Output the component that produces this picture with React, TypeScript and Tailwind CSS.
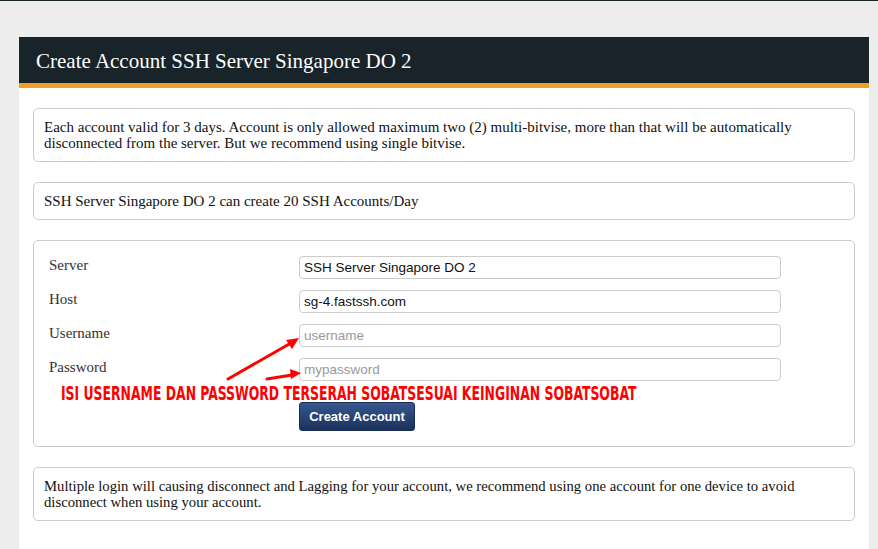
import React from "react";

const serif = { fontFamily: '"Liberation Serif", "Times New Roman", serif' };

function Box({ children, className = "" }: { children: React.ReactNode; className?: string }) {
  return (
    <div className={"rounded-[5px] border border-[#cccccc] bg-white " + className}>{children}</div>
  );
}

function Field({ label, value, placeholder }: { label: string; value?: string; placeholder?: string }) {
  return (
    <div className="flex items-start h-[23px]">
      <div className="w-[250px] text-[15px] leading-[18px] text-[#333]" style={serif}>{label}</div>
      <input
        readOnly
        defaultValue={value}
        placeholder={placeholder}
        className="w-[482px] h-[23px] rounded-[4px] border border-[#cccccc] bg-white px-[4px] text-[13.5px] text-[#111] placeholder:text-[#999] outline-none"
        style={{ fontFamily: '"Liberation Sans", Arial, sans-serif' }}
      />
    </div>
  );
}

export default function App() {
  return (
    <div className="relative w-[878px] h-[549px] overflow-hidden bg-[#ededed]">
      <div className="h-[1px] bg-[#18232a]" />
      <div className="pt-[36px] pl-[19px]">
        <div className="w-[850px] bg-white h-[520px]">
          <div className="h-[46px] bg-[#18232a] flex items-center pl-[17px]">
            <h1 className="text-white text-[21px] leading-none pt-[2px]" style={serif}>
              Create Account SSH Server Singapore DO 2
            </h1>
          </div>
          <div className="h-[5px] bg-[#ef9f24]" />
          <div className="pt-[20px] pl-[14px] w-[836px] flex flex-col gap-[20px]">
            <Box className="px-[10px] py-[10px] text-[15px] leading-[16px] text-[#111]">
              <p style={serif}>
                Each account valid for 3 days. Account is only allowed maximum two (2) multi-bitvise, more than that will be automatically disconnected from the server. But we recommend using single bitvise.
              </p>
            </Box>
            <Box className="px-[10px] py-[10px] text-[15px] leading-[16px] text-[#111]">
              <p style={serif}>SSH Server Singapore DO 2 can create 20 SSH Accounts/Day</p>
            </Box>
            <Box className="relative pl-[15px] pt-[15px] pb-[15px] h-[207px]">
              <div className="flex flex-col gap-[11px]">
                <Field label="Server" value="SSH Server Singapore DO 2" />
                <Field label="Host" value="sg-4.fastssh.com" />
                <Field label="Username" placeholder="username" />
                <Field label="Password" placeholder="mypassword" />
              </div>
              <div className="mt-[1px] ml-[12px] h-[22px] whitespace-nowrap">
                <span
                  className="inline-block origin-left scale-x-[0.69] text-[#ff0000] text-[20px] leading-[22px] font-bold"
                  style={{ fontFamily: '"DejaVu Sans Condensed", "DejaVu Sans", sans-serif' }}
                >
                  ISI USERNAME DAN PASSWORD TERSERAH SOBATSESUAI KEINGINAN SOBATSOBAT
                </span>
              </div>
              <div className="ml-[250px] mt-[-2px]">
                <button
                  className="h-[29px] w-[116px] rounded-[3px] text-white text-[13px] font-bold bg-gradient-to-b from-[#36578e] to-[#1c325c] border border-[#1a2e55]"
                  style={{ fontFamily: '"Liberation Sans", Arial, sans-serif' }}
                >
                  Create Account
                </button>
              </div>
              <svg className="absolute left-0 top-0 pointer-events-none" width="300" height="160" viewBox="0 0 300 160">
                <g stroke="#ff0000" strokeWidth="3" fill="#ff0000" strokeLinecap="round">
                  <line x1="194" y1="138" x2="257" y2="102" />
                  <polygon points="265,97 252,99 258,108" stroke="none" />
                  <line x1="233" y1="138" x2="258" y2="134" />
                  <polygon points="267,132 256,128 257,138" stroke="none" />
                </g>
              </svg>
            </Box>
            <Box className="px-[10px] py-[10px] text-[14.7px] leading-[16px] text-[#111]">
              <p style={serif}>
                Multiple login will causing disconnect and Lagging for your account, we recommend using one account for one device to avoid disconnect when using your account.
              </p>
            </Box>
          </div>
        </div>
      </div>
    </div>
  );
}
